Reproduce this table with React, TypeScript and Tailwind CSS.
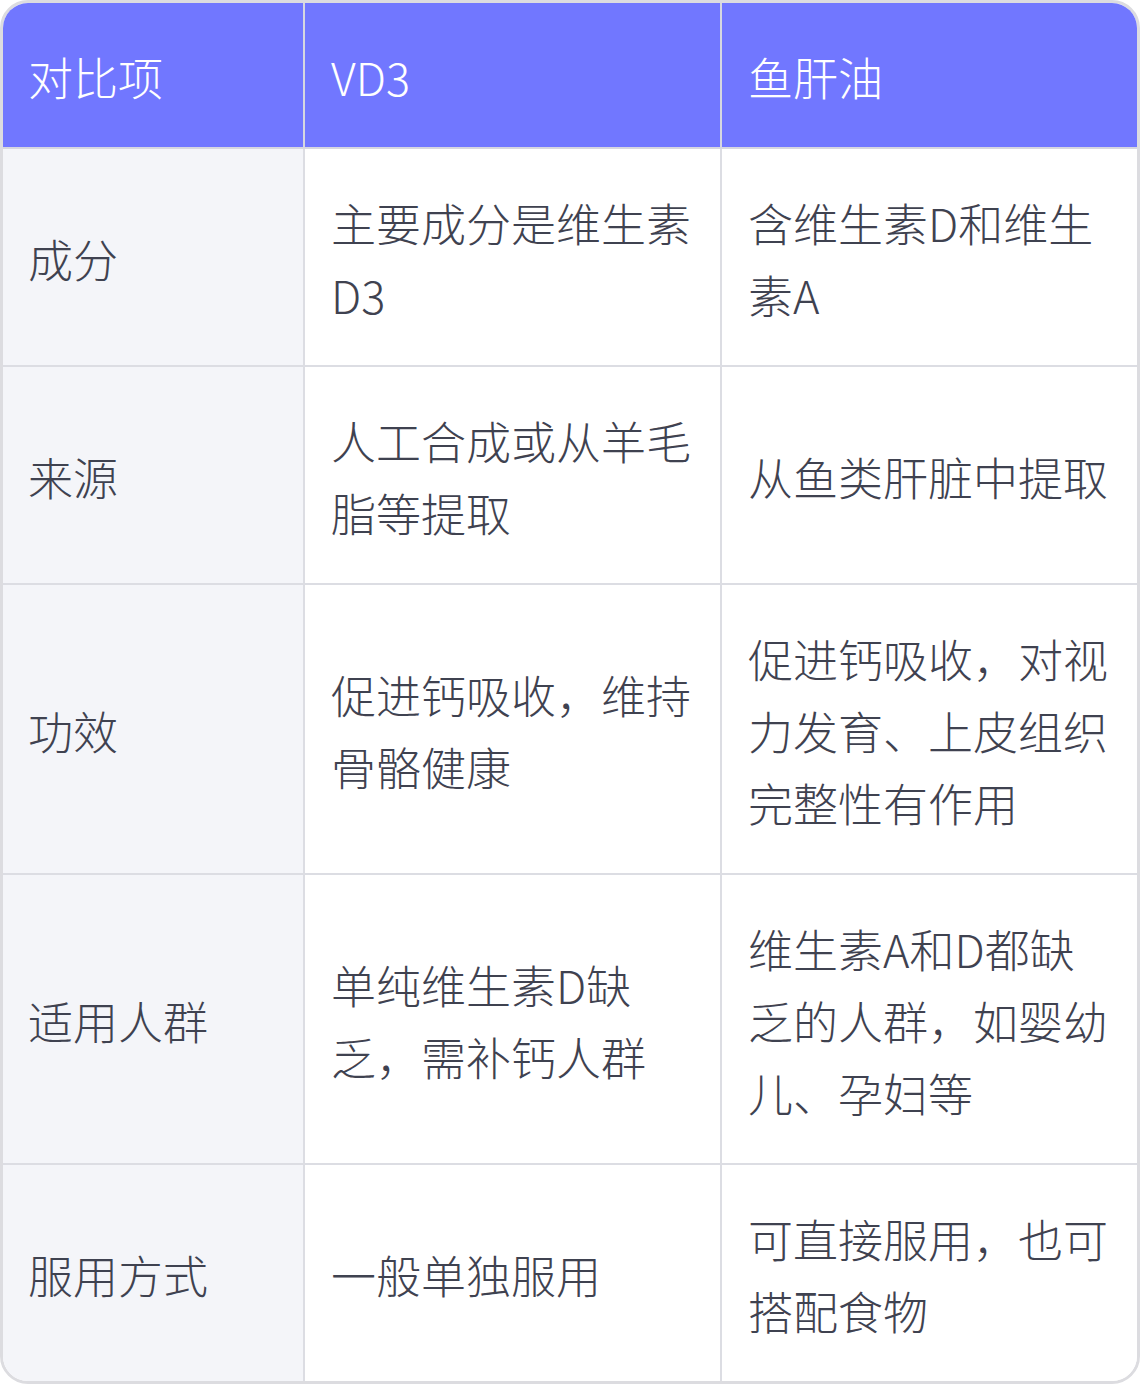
import React from 'react';

const rows: [string, string, string][] = [
  ['成分', '主要成分是维生素D3', '含维生素D和维生素A'],
  ['来源', '人工合成或从羊毛脂等提取', '从鱼类肝脏中提取'],
  ['功效', '促进钙吸收，维持骨骼健康', '促进钙吸收，对视力发育、上皮组织完整性有作用'],
  ['适用人群', '单纯维生素D缺乏，需补钙人群', '维生素A和D都缺乏的人群，如婴幼儿、孕妇等'],
  ['服用方式', '一般单独服用', '可直接服用，也可搭配食物'],
];

const font = { fontFamily: '"Noto Sans CJK SC", "Noto Sans", sans-serif' };

export default function App() {
  return (
    <div className="w-[1140px] bg-white" style={font}>
      <div className="rounded-[28px] border-[3px] border-[#dcdce0] overflow-hidden">
        <div className="grid grid-cols-[302px_417px_415px] text-[45px] leading-[72px] font-extralight">
          {['对比项', 'VD3', '鱼肝油'].map((h, i) => (
            <div
              key={h}
              className={`bg-[#7177ff] text-white pt-[38px] pb-[34px] pr-[24px] border-b-2 border-[#d6d7e0] ${
                i === 0 ? 'pl-[25px]' : 'pl-[26px]'
              } ${i < 2 ? 'border-r-2' : ''}`}
            >
              {h}
            </div>
          ))}
          {rows.map((r, ri) =>
            r.map((c, ci) => (
              <div
                key={`${ri}-${ci}`}
                className={`flex items-center pt-[38px] pb-[34px] pr-[24px] text-[#3f4250] border-[#dcdde3] ${
                  ci === 0 ? 'pl-[25px] bg-[#f4f5f9]' : 'pl-[26px] bg-white'
                } ${ci < 2 ? 'border-r-2' : ''} ${ri < rows.length - 1 ? 'border-b-2' : ''}`}
              >
                <span>{c}</span>
              </div>
            ))
          )}
        </div>
      </div>
    </div>
  );
}
